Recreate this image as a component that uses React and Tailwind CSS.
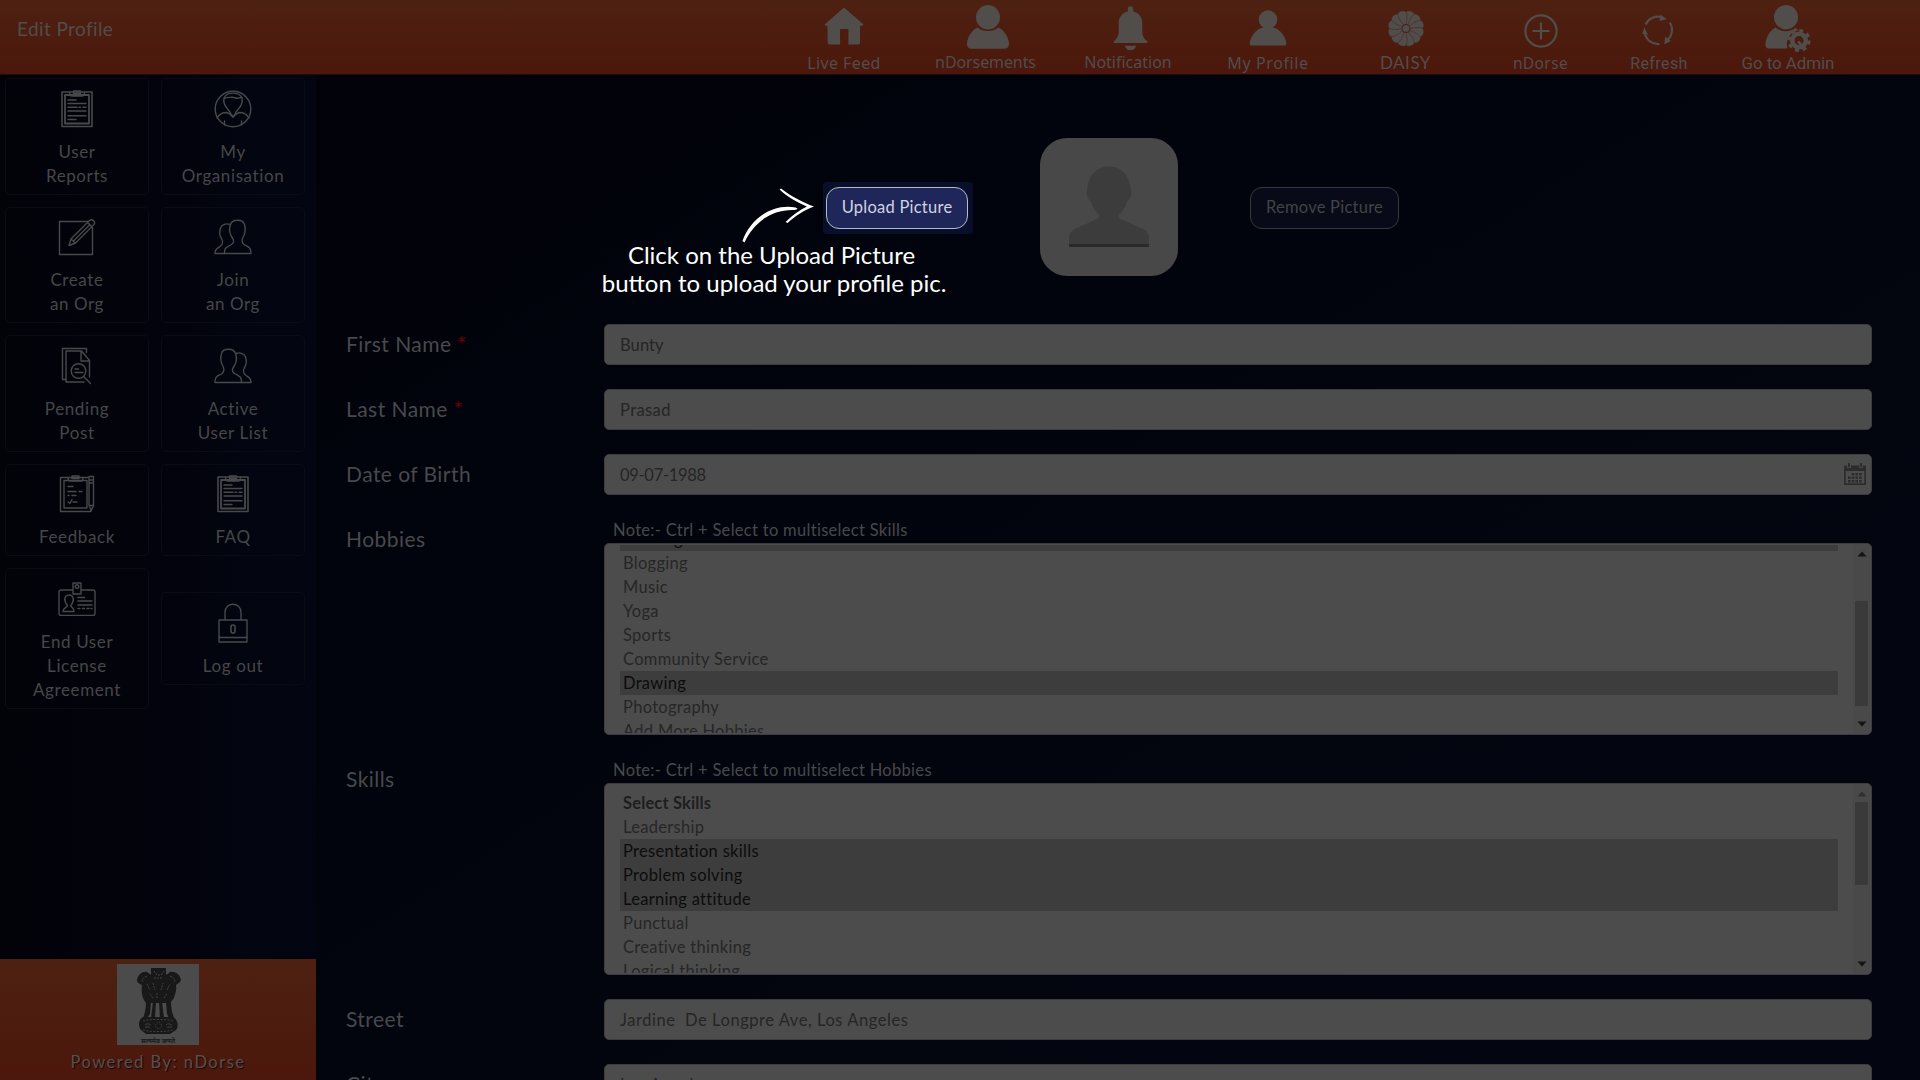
const line = {
  fill: 'none',
  stroke: 'currentColor',
  strokeWidth: 1.4,
  strokeLinecap: 'round',
  strokeLinejoin: 'round',
};

/* ---------- header icons ---------- */

const HomeIcon = () => (
  <svg width="40" height="38" viewBox="0 0 40 38" fill="currentColor">
    <path d="M20 .5 39.5 17.6 37.8 19H36v16.4a2 2 0 0 1-2 2H24.4V22h-8.3v15.4H5.6a2 2 0 0 1-2-2V19H2L.6 17.6Z" />
  </svg>
);

const PersonIcon = () => (
  <svg width="44" height="44" viewBox="0 0 44 44" fill="currentColor">
    <ellipse cx="22" cy="12.3" rx="12" ry="12.2" />
    <path d="M11.5 22.5c5.5 4.8 15.5 4.8 21 0C38.5 25.5 42.5 32 43 38.5c.2 3-1.5 5.2-4 5.2H5c-2.5 0-4.2-2.2-4-5.2.5-6.5 4.5-13 10.5-16Z" />
  </svg>
);

const BellIcon = () => (
  <svg width="35" height="45" viewBox="0 0 35 45" fill="currentColor">
    <path d="M17.5.3c1.6 0 2.7 1.2 2.7 2.8v2.5c5.3 1.2 9.1 5.6 9.1 11.4v9.5c0 3.2 1.5 6 4.8 8.8.8.8.3 1.7-.7 1.7H1.6c-1 0-1.5-.9-.7-1.7C4.2 32.5 5.7 29.7 5.7 26.5V17c0-5.8 3.8-10.2 9.1-11.4V3.1c0-1.6 1.1-2.8 2.7-2.8Z" />
    <path d="M12 39.8h11c-.6 3-2.8 4.5-5.5 4.5S12.6 42.8 12 39.8Z" />
  </svg>
);

const ProfileIcon = () => (
  <svg width="38" height="36" viewBox="0 0 38 36" fill="currentColor">
    <circle cx="19" cy="9.5" r="9.3" />
    <path d="M13.5 17.5h11C31.5 19.5 37 27 37.3 34c0 1-.5 1.6-1.5 1.6H2.2c-1 0-1.5-.6-1.5-1.6C1 27 6.5 19.5 13.5 17.5Z" />
  </svg>
);

const DaisyIcon = () => (
  <svg width="36" height="37" viewBox="-18 -18.5 36 37">
    <g fill="currentColor" stroke="#4c1c0f" strokeWidth=".4">
      {Array.from({ length: 12 }, (_, i) => (
        <path
          key={i}
          transform={`rotate(${i * 30 + 15})`}
          d="M-1.3-4C-3.5-9-5-13-4.5-15.5 -3.6-19 3.600-19 4.500-15.500 5-13 3.500-9 1.300-4Z"
        />
      ))}
      <circle r="4" strokeWidth=".9" />
    </g>
  </svg>
);

const PlusIcon = () => (
  <svg width="34" height="34" viewBox="0 0 34 34" fill="none" stroke="currentColor" strokeWidth="2.2">
    <circle cx="17" cy="17" r="15.6" />
    <path d="M17 8.5v17M8.5 17h17" />
  </svg>
);

const RefreshIcon = () => (
  <svg width="32" height="32" viewBox="0 0 32 32">
    <g fill="none" stroke="currentColor" strokeWidth="2.2">
      <path d="M3.600 10.500A13.500 13.500 0 0 1 20 3.200" />
      <path d="M27.800 8.500A13.500 13.500 0 0 1 25.500 26" />
      <path d="M17.500 30A13.500 13.500 0 0 1 2.800 19" />
    </g>
    <g fill="currentColor">
      <path d="M18.500.5 25 5.200 17.600 7Z" />
      <path d="M23 22.500 29 27 22.500 30.200Z" />
      <path d="M2.200 13.500 6 20.500.2 20Z" />
    </g>
  </svg>
);

const AdminIcon = () => (
  <svg width="46" height="47" viewBox="0 0 46 47">
    <g fill="currentColor">
      <ellipse cx="21" cy="12.2" rx="12" ry="12.2" />
      <path d="M10.500 22.500c5 4.500 14 5 20 .5l3 2.300c-8.500 1.700-13.500 9.700-11 18.200H4c-2.500 0-3.800-1.500-3.600-4.500C1 32 4.800 25.500 10.500 22.500Z" />
    </g>
    <circle cx="34" cy="35.500" r="6.800" fill="none" stroke="currentColor" strokeWidth="4.600" />
    <circle cx="34" cy="35.500" r="10" fill="none" stroke="currentColor" strokeWidth="3.200" strokeDasharray="3.900 3.950" />
    <path d="M33 36.500 37.500 41" stroke="currentColor" strokeWidth="2.500" />
  </svg>
);

/* ---------- sidebar icons ---------- */

const ClipboardIcon = () => (
  <svg width="32" height="38" viewBox="0 0 32 38" {...line}>
    <path d="M1 2h30v34.500H1Z" strokeWidth="1.600" />
    <path d="M4 5h24v28.500H4Z" strokeWidth="1.800" />
    <path d="M8.500 2.500c0 3 1 3.500 2.500 3.500h10c1.500 0 2.500-.5 2.500-3.500M12.500 3.500V1h7v2.500Z" />
    <path d="M7 10h8M7 13.500h18M7 17.200h9M18 17.200h1.500M22 17.200h3M7 21h18M7 25.700h18M7 29.500h8" />
  </svg>
);

const OrgIcon = () => (
  <svg width="38" height="38" viewBox="0 0 38 38" {...line}>
    <circle cx="19" cy="19" r="17.800" />
    <path d="M10 8C13 1.500 25 1.500 28 8c.6 3.500-.5 7-2.500 9.500-1.500 2.500-3.500 3.800-4 6L19 27l-2.500-3.500c-.5-2.200-2.500-3.500-4-6C10.500 15 9.400 11.500 10 8Z" />
    <path d="M10.200 8.500c2.500-1.500 4.500-1 7-1.200 3-.6 4 1.200 6.300 1 1.800-.2 2.800-1.500 4.400-.5" />
    <path d="M3 28c2-3.500 5-5.500 9.500-5.500 2.500.5 4.500 2.500 6.500 4.500 2-2 4-4 6.500-4.500C30 22.500 33 24.500 35 28M10.500 31v4M27.500 31v4" />
  </svg>
);

const PencilIcon = () => (
  <svg width="38" height="38" viewBox="0 0 38 38" {...line}>
    <path d="M30 3.500H1.500v33h33V9.500" />
    <path d="M11 27.500 13 21 31.500 2.500c2.500-2 6.500 1 4.500 4L17.500 25ZM13 21l4.500 4M29.500 4.500l4.500 4.500M15.500 23 32 6.500" />
  </svg>
);

const GroupIcon = ({ flip }) => (
  <svg width="38" height="36" viewBox="0 0 38 36" className={flip ? '-scale-x-100' : ''} {...line}>
    <path d="M10.500 34.500c-.5-6.500 3-6.500 7-9 3.500-2.200 2-5 .3-7.500-2.300-3.500-2.500-9-1.300-12.500 1.500-5.500 12.500-6 14 0 1 3.500.5 9-1.300 12.500-1.700 3-1.700 5.500.8 7.500 3.500 2.500 7.500 2.500 7 9Z" />
    <path d="M10.500 34.500H1c-.3-4.500 2.500-5 5-7 3.500-2.700 3-5 1.500-8-2-3-2-7.500-1-10.500 1.200-3.500 6-5 9.500-3.500" />
  </svg>
);

const SearchDocIcon = () => (
  <svg width="32" height="38" viewBox="0 0 32 38" {...line}>
    <path d="M5 32.500H1.500V1.500h24v4" />
    <path d="M5 4h15.500l8 9.500V30M5 4v31h18M20 4.500v9.500h8" />
    <circle cx="17.500" cy="24" r="7.300" />
    <path d="M22.700 29.500 29.500 36.500M14 22h3.500M14 25.500h8" />
  </svg>
);

const FeedbackIcon = () => (
  <svg width="36" height="38" viewBox="0 0 36 38" {...line}>
    <path d="M29 2.500H1.500v34H32V35" />
    <path d="M5 5.500h23v27.500H5Z" />
    <path d="M9 2.500c0 2.500.5 3.500 2 3.500h11c1.500 0 2-1 2-3.500M13 3.500V1h7v2.500Z" />
    <path d="M9 11.500h5M9 16.500h8M20 16.500h3M9 20.500h1M13 20.500h4M9 27l2 1.500 2-4M14 27h4" />
    <path d="M30 1.500h4.500v29l-2.200 5-2.300-5ZM30 5h4.500M30 8h4.500M30 30.500h4.500" />
  </svg>
);

const BadgeIcon = () => (
  <svg width="38" height="34" viewBox="0 0 38 34" {...line}>
    <path d="M14.500 8H3a2 2 0 0 0-2 2v21.500a2 2 0 0 0 2 2h32a2 2 0 0 0 2-2V10a2 2 0 0 0-2-2H23.500" />
    <path d="M15 1h8v11h-8Z" />
    <circle cx="19" cy="4.500" r="1.800" />
    <path d="M5 29.500c-.2-4 4-3.500 4.500-6C7 21 6 17 7.500 14.500c2-2 5.500-2 7 0 1.500 2.500.5 6.500-1.700 9 .5 2.500 3.700 2.500 3.200 6Z" />
    <path d="M20 15.500h6.500M20 19h14M20 23h14M20 26.500h2M24.500 26.500h2M29 26.500h2M33 26.500h1" />
  </svg>
);

const LockIcon = () => (
  <svg width="30" height="40" viewBox="0 0 30 40" {...line}>
    <path d="M1 17h28v22H1ZM1 34.500h28M7 17V9.500c0-11 16-11 16 0V17" />
    <path d="M13 24c0-2.700 4-2.700 4 0v4c0 2.700-4 2.700-4 0Z" strokeWidth="1.600" />
  </svg>
);

/* ---------- data ---------- */

const nav = [
  { label: 'Live Feed', Icon: HomeIcon, box: 'w-[140px]', icon: 'pt-[7px]', text: 'font-["Noto_Sans",sans-serif] text-[16px] tracking-[0.4px]', lift: 'mt-[2px]' },
  { label: 'nDorsements', Icon: PersonIcon, box: 'w-[143px]', icon: 'pt-[5px] pl-[4px]', text: 'font-["Noto_Sans",sans-serif] text-[16px] tracking-[-0.1px]', lift: 'mt-px' },
  { label: 'Notification', Icon: BellIcon, box: 'w-[142px]', icon: 'pt-[6px] pl-[4px]', text: 'font-["Noto_Sans",sans-serif] text-[16px]', lift: 'mt-px' },
  { label: 'My Profile', Icon: ProfileIcon, box: 'w-[138px]', icon: 'pt-[10px]', text: 'font-["Noto_Sans",sans-serif] text-[16px] tracking-[0.6px]', lift: 'mt-[2px]' },
  { label: 'DAISY', Icon: DaisyIcon, box: 'w-[137px]', icon: 'pt-[10px]', text: 'font-[Lato,sans-serif] text-[17px] tracking-[0.5px]', lift: 'mt-px' },
  { label: 'nDorse', Icon: PlusIcon, box: 'w-[133px]', icon: 'pt-[14px]', text: 'font-["Noto_Sans",sans-serif] text-[15.5px] tracking-[0.4px]', lift: 'mt-[2px]' },
  { label: 'Refresh', Icon: RefreshIcon, box: 'w-[104px]', icon: 'pt-[14px] pr-[3px]', text: 'font-[Roboto,sans-serif] text-[16px] tracking-[0.4px]', lift: 'mt-[2px]' },
  { label: 'Go to Admin', Icon: AdminIcon, box: 'w-[154px]', icon: 'pt-[5px]', text: 'font-[Roboto,sans-serif] text-[17px] tracking-[-0.1px]', lift: 'mt-[2px]' },
];

const tiles = [
  { lines: ['User', 'Reports'], Icon: ClipboardIcon },
  { lines: ['My', 'Organisation'], Icon: OrgIcon },
  { lines: ['Create', 'an Org'], Icon: PencilIcon },
  { lines: ['Join', 'an Org'], Icon: GroupIcon },
  { lines: ['Pending', 'Post'], Icon: SearchDocIcon },
  { lines: ['Active', 'User List'], Icon: () => <GroupIcon flip /> },
  { lines: ['Feedback'], Icon: FeedbackIcon },
  { lines: ['FAQ'], Icon: ClipboardIcon },
  { lines: ['End User', 'License', 'Agreement'], Icon: BadgeIcon },
  { lines: ['Log out'], Icon: LockIcon },
];

const hobbies = [
  { name: 'Reading', on: true },
  { name: 'Blogging' },
  { name: 'Music' },
  { name: 'Yoga' },
  { name: 'Sports' },
  { name: 'Community Service' },
  { name: 'Drawing', on: true },
  { name: 'Photography' },
  { name: 'Add More Hobbies' },
];

const skills = [
  { name: 'Select Skills', head: true },
  { name: 'Leadership' },
  { name: 'Presentation skills', on: true },
  { name: 'Problem solving', on: true },
  { name: 'Learning attitude', on: true },
  { name: 'Punctual' },
  { name: 'Creative thinking' },
  { name: 'Logical thinking' },
];

/* ---------- pieces ---------- */

function Header() {
  return (
    <header className="flex h-[75px] shrink-0 justify-between border-b border-[#210c09] bg-linear-to-b from-[#4d2111] to-[#4c170c] pr-[55px] text-[#504d4b]">
      <h1 className="pt-[15px] pl-[17px] text-[19px] leading-7 tracking-[0.4px]">Edit Profile</h1>
      <nav className="flex">
        {nav.map(({ label, Icon, box, icon, text, lift }) => (
          <a key={label} className={`flex flex-col items-center ${box}`}>
            <span className={`flex h-[51px] items-start ${icon}`}>
              <Icon />
            </span>
            <span className={`leading-[21px] whitespace-nowrap ${text} ${lift}`}>{label}</span>
          </a>
        ))}
      </nav>
    </header>
  );
}

function Emblem() {
  return (
    <svg width="82" height="81" viewBox="0 0 82 81" className="bg-[#4b4b4b]">
      <g fill="#181818">
        <path d="M34 4h15v7l4-3c6-1 10 3 11 8-1 3-4 4-5 5 1 5-1 9-2 13l-4 5H29c-4-5-5-11-4-18-2-1-5-2-5-5 1-6 6-9 10-8l4 3Z" />
        <path d="M29 38h5l-1 12-3 4h-4c2-5 3-10 3-16ZM36 38h3l-1 16h-4ZM42 38h3l2 16h-4ZM49 38h5c0 6 1 11 3 16h-5l-2-4Z" />
        <path d="M26 53h30c5 3 6 9 3 13l-6 4H29l-5-4c-3-4-3-10 2-13Z" />
      </g>
      <g fill="none" stroke="#4b4b4b" strokeWidth=".8">
        <path d="M37 7l3 4h4l3-4M37 14h8M30 12c-3 1-5 3-5 6M53 12c3 1 5 3 5 6M30 20l3 6M36 19l2 7M44 26l2-7M50 26l3-6M33 30l3 4M40 29v6M47 34l3-4" strokeDasharray="2 1" />
        <path d="M26 57c5-2 25-2 30 0M26 66c6 2 24 2 30 0" strokeDasharray="2 1.5" />
        <circle cx="41.5" cy="61.5" r="3" strokeDasharray="1.2 1.2" />
        <path d="M28 61c2-2 4-1 6 0M49 61c2-2 4-1 6 0M28 63h5M50 63h5" />
      </g>
      <text x="41" y="78.5" textAnchor="middle" fontSize="6.5" fontWeight="700" fill="#181818" fontFamily="Noto Sans, sans-serif">
        सत्यमेव जयते
      </text>
    </svg>
  );
}

function Sidebar() {
  return (
    <aside className="flex w-[316px] shrink-0 flex-col justify-between bg-linear-to-r from-[#020309] via-[#02030c] to-[#030612]">
      <div className="grid grid-cols-[144px_144px] items-center gap-x-3 gap-y-3 pt-[3px] pl-[5px] text-[#464749]">
        {tiles.map(({ lines, Icon }) => (
          <a
            key={lines.join(' ')}
            className="flex flex-col items-center rounded-[5px] border border-[#0a0c14] pb-[6px] text-[17px] leading-6 tracking-[0.6px]"
          >
            <span className="flex h-[60.5px] items-center pb-px text-[#48494b]">
              <Icon />
            </span>
            {lines.map((l) => (
              <span key={l}>{l}</span>
            ))}
          </a>
        ))}
      </div>
      <footer className="flex h-[121.5px] flex-col items-center bg-linear-to-b from-[#4d2111] to-[#4c170c] pt-[5.5px]">
        <Emblem />
        <p className="pt-[5px] text-[16.5px] leading-6 tracking-[1.5px] text-[#55504f] [text-shadow:1px_1px_1px_#1c0803]">
          Powered By: nDorse
        </p>
      </footer>
    </aside>
  );
}

function Row({ label, required, children }) {
  return (
    <div className="flex">
      <div className="w-[258px] shrink-0 text-[21px] leading-[40px] tracking-[0.45px] text-[#48494c]">
        {label} {required && <span className="font-bold text-[#5a0207]">*</span>}
      </div>
      <div className="w-[1268px]">{children}</div>
    </div>
  );
}

function Field({ value, tracking = 'tracking-[0.2px]', children }) {
  return (
    <div
      className={`flex h-[41px] items-center justify-between rounded-[5px] border border-[#3c3c3e] bg-[#4c4c4c] pr-[5px] pl-[15px] text-[16.5px] whitespace-pre text-[#252525] ${tracking}`}
    >
      <span className="pt-[2px]">{value}</span>
      {children}
    </div>
  );
}

const Triangle = ({ down, muted }) => (
  <svg width="10" height="6" viewBox="0 0 10 6" className={muted ? 'text-[#2f2f2f]' : 'text-[#141414]'}>
    <path d={down ? 'M.5.5h9L5 5.5Z' : 'M.5 5.5h9L5 .5Z'} fill="currentColor" />
  </svg>
);

function Listbox({ note, items, shift, thumb, atTop }) {
  return (
    <>
      <p className="-mt-px mb-px pl-[9px] text-[16.5px] leading-6 tracking-[0.3px] text-[#48494c]">{note}</p>
      <div className="flex h-48 overflow-hidden rounded-[5px] border border-[#3c3c3e] bg-[#4c4c4c]">
        <div className="mt-px mb-px ml-[15px] w-[1218px] shrink-0 overflow-hidden">
          <ul className={`text-[16.5px] leading-6 tracking-[0.3px] text-[#262626] ${shift}`}>
            {items.map(({ name, on, head }) => (
              <li
                key={name}
                className={`pl-[3px] ${on ? 'bg-[#3d3d3d] text-[#0c0c0c]' : ''} ${head ? 'font-bold tracking-[0.15px] text-[#1e1e1e]' : ''}`}
              >
                {name}
              </li>
            ))}
          </ul>
        </div>
        <div className="mr-px ml-auto flex w-[17px] flex-col items-center justify-between bg-[#494949] py-[7px]">
          <Triangle muted={atTop} />
          <div className="w-full grow px-[2px]">
            <div className={`bg-[#3a3a3a] ${thumb}`} />
          </div>
          <Triangle down />
        </div>
      </div>
    </>
  );
}

const Calendar = () => (
  <svg width="22" height="22" viewBox="0 0 22 22" fill="#2c2c2c" className="-mt-[2px]">
    <path d="M0 2.5h3v2.200h4V2.500h8v2.200h4V2.500h3V22H0ZM1.700 8v12.300h18.600V8Z" fillRule="evenodd" />
    <rect x="4" y="0" width="2" height="4" />
    <rect x="16" y="0" width="2" height="4" />
    {[10, 13.5, 17].map((y) =>
      [4, 7.7, 11.4, 15.1].map((x) =>
        y === 10 && x === 4 ? null : <rect key={`${x}-${y}`} x={x} y={y} width="2.6" height="2.4" />
      )
    )}
  </svg>
);

const Avatar = () => (
  <div className="flex h-[138px] w-[138px] justify-center rounded-[27px] bg-[#484848]">
    <svg width="82" height="82" viewBox="0 0 82 82" className="mt-[28px]">
      <path d="M1 72c0-5 3-8 8-10l18-8c3-1 5-3 4-5C27 45 25 41 23 36c-3-3-5-7-4-11C20 10 28 .5 41 .5S62 10 63 25c1 4-1 8-4 11-2 5-4 9-8 13-1 2 1 4 4 5l18 8c5 2 8 5 8 10v9H1Z" fill="#3c3c3c" />
      <path d="M1 78h80v1.500q0 1.500-2 1.500H3q-2 0-2-1.500Z" fill="#2a2929" />
    </svg>
  </div>
);

export default function App() {
  return (
    <div className="relative flex h-[1080px] w-[1920px] flex-col overflow-hidden bg-[#02030b] font-[Lato,sans-serif]">
      <Header />
      <div className="flex min-h-0 grow">
        <Sidebar />
        <main className="grow bg-linear-to-br from-[#01020a] via-[#02050e] to-[#030610] pl-[30px]">
          <section className="flex h-[249px] items-start pt-[63px]">
            <div className="mt-[44px] ml-[477px] flex h-[52px] w-[150px] rounded-[4px] bg-[#080f2b] pt-[5px] pl-[3px]">
              <button className="h-[41.5px] w-[142px] rounded-[13px] border-[1.5px] border-[#b9bbc9] bg-[#1f2659] pb-px text-[16.5px] tracking-[0.25px] text-[#cfd3e2]">
                Upload Picture
              </button>
            </div>
            <div className="ml-[67px]">
              <Avatar />
            </div>
            <button className="mt-[49px] ml-[72px] h-[41.5px] w-[149px] rounded-[12px] border border-[#37383e] bg-[#080a18] pb-px text-[16.5px] tracking-[0.25px] text-[#424347]">
              Remove Picture
            </button>
          </section>

          <form className="flex flex-col gap-6">
            <Row label="First Name" required>
              <Field value="Bunty" tracking="tracking-[0.1px]" />
            </Row>
            <Row label="Last Name" required>
              <Field value="Prasad" tracking="tracking-[0.4px]" />
            </Row>
            <Row label="Date of Birth">
              <Field value="09-07-1988" tracking="tracking-[-0.3px]">
                <Calendar />
              </Field>
            </Row>
            <Row label="Hobbies">
              <Listbox
                note="Note:- Ctrl + Select to multiselect Skills"
                items={hobbies}
                shift="-mt-[18px]"
                thumb="mt-[44px] h-[105px]"
              />
            </Row>
            <Row label="Skills">
              <Listbox
                note="Note:- Ctrl + Select to multiselect Hobbies"
                items={skills}
                shift="mt-[6px]"
                thumb="mt-[5px] h-[83px]"
                atTop
              />
            </Row>
            <Row label="Street">
              <Field value="Jardine  De Longpre Ave, Los Angeles" tracking="tracking-[0.55px]" />
            </Row>
            <Row label="City">
              <Field value="Los Angeles" tracking="tracking-[0.5px]" />
            </Row>
          </form>
        </main>
      </div>

      {/* walkthrough hint drawn over the form */}
      <div className="absolute top-[188px] left-[594px] flex w-[360px] flex-col items-center text-center text-[24px] leading-[28px] text-white">
        <svg width="73" height="56" viewBox="0 0 72 56" preserveAspectRatio="none" fill="#fff" className="ml-[8px]">
          <path d="M.5 53C8 31 30 15 53 19.500l2 1.500-3 1C31 21 12 33 2.500 54.500Z" />
          <path d="M37 1.500 38.500.5C48 8 60 14.500 71 18.500 61 22 52 28.500 45 35l-2-1C49 28 56 22.500 64 18.500 54 14 44 8.500 37 1.500Z" />
        </svg>
        <p className="-mt-[3px] pr-[5px] whitespace-nowrap">Click on the Upload Picture</p>
        <p className="whitespace-nowrap">button to upload your profile pic.</p>
      </div>
    </div>
  );
}
